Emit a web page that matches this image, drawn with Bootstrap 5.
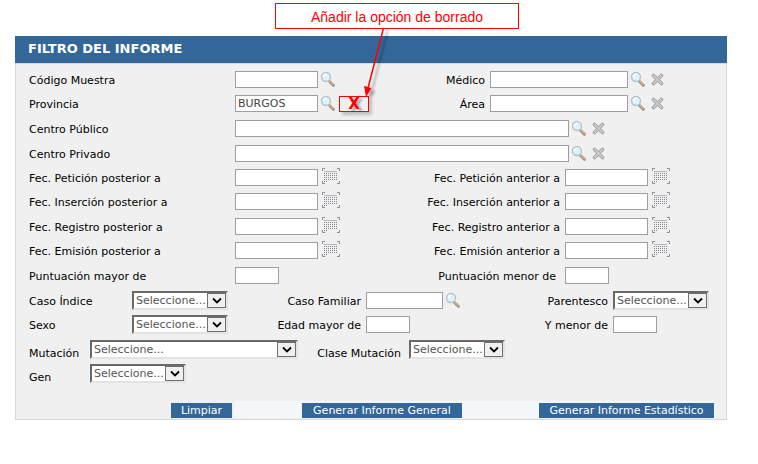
<!DOCTYPE html>
<html lang="es">
<head>
<meta charset="utf-8">
<meta name="viewport" content="width=device-width, initial-scale=1">
<title>Filtro del informe</title>
<link href="https://cdn.jsdelivr.net/npm/bootstrap@5.3.0/dist/css/bootstrap.min.css" rel="stylesheet">
<style>
  body { font-family: "DejaVu Sans", Verdana, sans-serif; font-size: 11px; line-height: 16px; color: #000; background: #fff; }
  .page { padding: 3px 31px 0 15px; }
  .note { width: 244px; height: 26px; margin: 0 auto 7px 260px; border: 1px solid #f00; color: #f00; background: #fff;
          font: 14px/26px "Liberation Sans", Arial, sans-serif; text-align: center; }
  .note-arrow { position: absolute; left: 356px; top: 28px; pointer-events: none; filter: drop-shadow(4px 3px 1px rgba(0,0,0,.3)); overflow: visible; }
  .panel-title { background: #336699; color: #fff; font-size: 13px; font-weight: 700; line-height: 26px; padding: 0 13px 1px; margin: 0; }
  .panel-body { background: #f0f0f0; border: 1px solid #d8d8d8; padding: 3px 0 1px; }
  .line { display: flex; align-items: flex-start; height: 24px; padding: 0 12px 0 13px; }
  .line.tall { height: 25px; }
  .line > label { padding-top: 6px; white-space: nowrap; }
  .line.low > label { padding-top: 9px; }
  .lab-main { width: 206px; }
  .lab-mid { width: 103px; }
  .lab-short { width: 61px; }
  .lab-center { width: 138px; text-align: right; padding-right: 5px; }
  .lab-clase { width: 111px; text-align: right; padding-right: 8px; }
  .lab-end { flex: 1; text-align: right; padding-right: 5px; }
  .lab-end.wide { padding-right: 9px; }
  .tail { display: flex; align-items: flex-start; }
  .tail-a { width: 224px; } .tail-b { width: 149px; } .tail-c { width: 101px; } .tail-d { width: 145px; }
  .box { height: 17px; margin-top: 4px; padding: 0 2px; border: 1px solid #a09c9f; border-radius: 0; background: #fff; color: #444; font-size: 11px; line-height: 16px; min-width: 0; }
  .w-date { width: 83px; } .w-num { width: 44px; } .w-fam { width: 77px; } .w-name { width: 138px; }
  .pick { height: 19px; width: 96px; margin-top: 3px; padding: 0 18px 0 2px; appearance: none; border: 2px solid; border-color: #696969 #e3e3e3 #e3e3e3 #696969;
          border-radius: 0; color: #555; font-size: 11px; line-height: 15px;
          background: #fff url("data:image/svg+xml,%3Csvg xmlns='http://www.w3.org/2000/svg' width='19' height='15'%3E%3Crect x='.5' y='.5' width='18' height='14' fill='%23f0f0f0' stroke='%23707070'/%3E%3Cpath d='M6 5.5l4 4 4-4' fill='none' stroke='%23000' stroke-width='1.8'/%3E%3C/svg%3E") right center no-repeat; }
  .pick.long { width: 208px; }
  .tool { display: block; border: 0; background: none; padding: 0; margin: 4px 0 0 2px; line-height: 0; flex: none; }
  .tool.cal { margin: 3px 0 0 4px; }
  .tool.del { margin: 6px 0 0 5px; }
  .clear { width: 30px; height: 16px; margin: 5px 0 0 3px; padding: 0; border: 1px solid #f00; background: none; color: #f00; font-size: 15px; font-weight: 700; line-height: 13px;
           text-shadow: 3px 2px 2px rgba(0,0,0,.3); box-shadow: 3px 3px 3px rgba(0,0,0,.2); }
  .actions { display: flex; margin-top: 16px; padding-right: 10px; }
  .strip { display: flex; flex: 1; justify-content: space-between; margin-left: 2px; padding: 2px 2px 0 68px; background: #f3f7f9; }
  .act { border: 0; border-radius: 0; padding: 0; height: 15px; background: #336699; color: #fff; font-size: 11px; line-height: 15px; }
  .act-s { width: 61px; margin: 2px 0 0 155px; } .act-m { width: 160px; } .act-l { width: 175px; }
</style>
<script src="https://cdn.jsdelivr.net/npm/bootstrap@5.3.0/dist/js/bootstrap.bundle.min.js"></script>
</head>
<body>
<svg width="0" height="0" class="position-absolute" aria-hidden="true">
  <symbol id="lens" viewBox="0 0 16 16">
    <path d="M9.500 10.500l4 3.800" stroke="#9a9a9a" stroke-width="3" stroke-linecap="round"/>
    <path d="M10 10l3.700 3.400" stroke="#e0b084" stroke-width="1.500" stroke-linecap="round"/>
    <circle cx="6" cy="6" r="4.500" fill="#dcf1f9" stroke="#b3c3cf" stroke-width="1.300"/>
    <path d="M3.500 6a3 3 0 0 1 3-2.700" fill="none" stroke="#fff" stroke-width="1.500"/>
  </symbol>
  <symbol id="cross" viewBox="0 0 13 13">
    <path d="M2.500 2.500l8 8m0-8l-8 8" stroke="#a2a2a2" stroke-width="3.600" stroke-linecap="round"/>
    <path d="M2.500 2.500l8 8m0-8l-8 8" stroke="#c8c8c8" stroke-width="1.900" stroke-linecap="round"/>
  </symbol>
  <symbol id="calendar" viewBox="0 0 18 16">
    <path d="M.5 3V.5H3M15 .5h2.500V3M.5 13v2.500H3M15 15.500h2.500V13" fill="none" stroke="#8a8a9e"/>
    <path d="M2 3.500h13" stroke="#b4b4c2"/>
    <path d="M2 5.500h13M2 7.500h13M2 9.500h13M2 11.500h13M2 13.500h3" stroke="#85858d" stroke-dasharray="1 1"/>
  </symbol>
</svg>

<main class="page position-relative">
  <div class="note">Añadir la opción de borrado</div>
  <svg class="note-arrow" width="30" height="70" aria-hidden="true">
    <path d="M27.500 0L12 60" stroke="#f00" stroke-width="1.500"/>
    <path d="M10 69L8 58l7.500 2z" fill="#f00"/>
  </svg>
  <form>
    <h1 class="panel-title">FILTRO DEL INFORME</h1>
    <div class="panel-body">
      <div class="line">
        <label class="lab-main" for="codigo">Código Muestra</label><input class="box w-date" id="codigo">
        <button type="button" class="tool" aria-label="Buscar muestra"><svg width="16" height="16"><use href="#lens"/></svg></button>
        <label class="lab-end" for="medico">Médico</label>
        <div class="tail tail-a"><input class="box w-name" id="medico">
          <button type="button" class="tool" aria-label="Buscar médico"><svg width="16" height="16"><use href="#lens"/></svg></button>
          <button type="button" class="tool del" aria-label="Borrar médico"><svg width="13" height="13"><use href="#cross"/></svg></button></div>
      </div>
      <div class="line tall">
        <label class="lab-main" for="provincia">Provincia</label><input class="box w-date" id="provincia" value="BURGOS">
        <button type="button" class="tool" aria-label="Buscar provincia"><svg width="16" height="16"><use href="#lens"/></svg></button>
        <button type="button" class="clear" aria-label="Borrar provincia">X</button>
        <label class="lab-end" for="area">Área</label>
        <div class="tail tail-a"><input class="box w-name" id="area">
          <button type="button" class="tool" aria-label="Buscar área"><svg width="16" height="16"><use href="#lens"/></svg></button>
          <button type="button" class="tool del" aria-label="Borrar área"><svg width="13" height="13"><use href="#cross"/></svg></button></div>
      </div>
      <div class="line tall">
        <label class="lab-main" for="publico">Centro Público</label><input class="box flex-grow-1" id="publico">
        <div class="tail tail-d">
          <button type="button" class="tool" aria-label="Buscar centro público"><svg width="16" height="16"><use href="#lens"/></svg></button>
          <button type="button" class="tool del" aria-label="Borrar centro público"><svg width="13" height="13"><use href="#cross"/></svg></button></div>
      </div>
      <div class="line">
        <label class="lab-main" for="privado">Centro Privado</label><input class="box flex-grow-1" id="privado">
        <div class="tail tail-d">
          <button type="button" class="tool" aria-label="Buscar centro privado"><svg width="16" height="16"><use href="#lens"/></svg></button>
          <button type="button" class="tool del" aria-label="Borrar centro privado"><svg width="13" height="13"><use href="#cross"/></svg></button></div>
      </div>
      <div class="line">
        <label class="lab-main" for="pet1">Fec. Petición posterior a</label><input class="box w-date" id="pet1">
        <button type="button" class="tool cal" aria-label="Calendario"><svg width="18" height="16"><use href="#calendar"/></svg></button>
        <label class="lab-end" for="pet2">Fec. Petición anterior a</label>
        <div class="tail tail-b"><input class="box w-date" id="pet2">
          <button type="button" class="tool cal" aria-label="Calendario"><svg width="18" height="16"><use href="#calendar"/></svg></button></div>
      </div>
      <div class="line tall">
        <label class="lab-main" for="ins1">Fec. Inserción posterior a</label><input class="box w-date" id="ins1">
        <button type="button" class="tool cal" aria-label="Calendario"><svg width="18" height="16"><use href="#calendar"/></svg></button>
        <label class="lab-end" for="ins2">Fec. Inserción anterior a</label>
        <div class="tail tail-b"><input class="box w-date" id="ins2">
          <button type="button" class="tool cal" aria-label="Calendario"><svg width="18" height="16"><use href="#calendar"/></svg></button></div>
      </div>
      <div class="line">
        <label class="lab-main" for="reg1">Fec. Registro posterior a</label><input class="box w-date" id="reg1">
        <button type="button" class="tool cal" aria-label="Calendario"><svg width="18" height="16"><use href="#calendar"/></svg></button>
        <label class="lab-end" for="reg2">Fec. Registro anterior a</label>
        <div class="tail tail-b"><input class="box w-date" id="reg2">
          <button type="button" class="tool cal" aria-label="Calendario"><svg width="18" height="16"><use href="#calendar"/></svg></button></div>
      </div>
      <div class="line tall">
        <label class="lab-main" for="emi1">Fec. Emisión posterior a</label><input class="box w-date" id="emi1">
        <button type="button" class="tool cal" aria-label="Calendario"><svg width="18" height="16"><use href="#calendar"/></svg></button>
        <label class="lab-end" for="emi2">Fec. Emisión anterior a</label>
        <div class="tail tail-b"><input class="box w-date" id="emi2">
          <button type="button" class="tool cal" aria-label="Calendario"><svg width="18" height="16"><use href="#calendar"/></svg></button></div>
      </div>
      <div class="line tall">
        <label class="lab-main" for="pun1">Puntuación mayor de</label><input class="box w-num" id="pun1">
        <label class="lab-end wide" for="pun2">Puntuación menor de</label>
        <div class="tail tail-b"><input class="box w-num" id="pun2"></div>
      </div>
      <div class="line">
        <label class="lab-mid" for="indice">Caso Índice</label><select class="pick" id="indice"><option>Seleccione...</option></select>
        <label class="lab-center" for="familiar">Caso Familiar</label><input class="box w-fam" id="familiar">
        <button type="button" class="tool" aria-label="Buscar caso familiar"><svg width="16" height="16"><use href="#lens"/></svg></button>
        <label class="lab-end" for="parentesco">Parentesco</label>
        <div class="tail tail-c"><select class="pick" id="parentesco"><option>Seleccione...</option></select></div>
      </div>
      <div class="line tall">
        <label class="lab-mid" for="sexo">Sexo</label><select class="pick" id="sexo"><option>Seleccione...</option></select>
        <label class="lab-center" for="edad1">Edad mayor de</label><input class="box w-num" id="edad1">
        <label class="lab-end" for="edad2">Y menor de</label>
        <div class="tail tail-c"><input class="box w-num" id="edad2"></div>
      </div>
      <div class="line low">
        <label class="lab-short" for="mutacion">Mutación</label><select class="pick long" id="mutacion"><option>Seleccione...</option></select>
        <label class="lab-clase" for="clase">Clase Mutación</label><select class="pick" id="clase"><option>Seleccione...</option></select>
      </div>
      <div class="line low">
        <label class="lab-short" for="gen">Gen</label><select class="pick" id="gen"><option>Seleccione...</option></select>
      </div>
      <div class="actions">
        <button type="reset" class="act act-s">Limpiar</button>
        <div class="strip">
          <button type="button" class="act act-m">Generar Informe General</button>
          <button type="button" class="act act-l">Generar Informe Estadístico</button>
        </div>
      </div>
    </div>
  </form>
</main>
</body>
</html>
